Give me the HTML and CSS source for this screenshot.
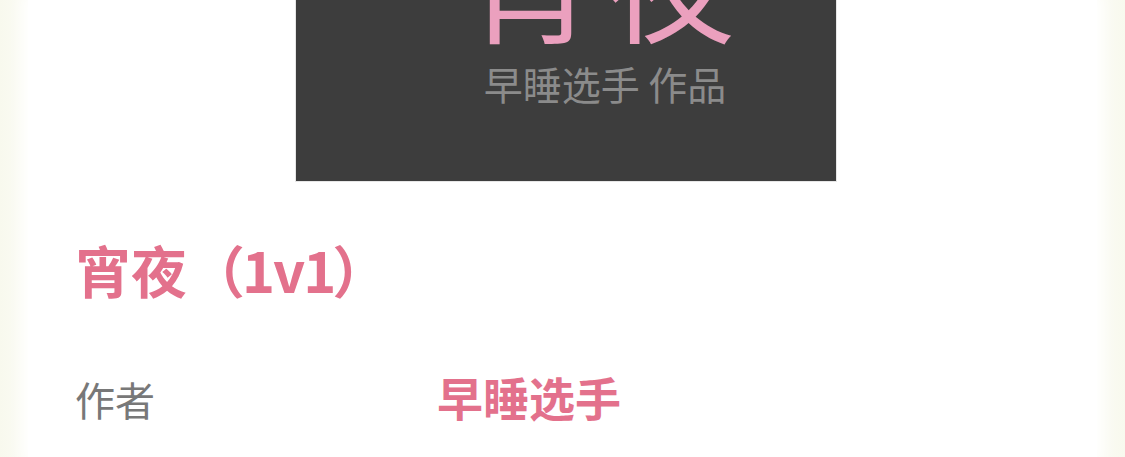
FILE: index.html
```html
<!DOCTYPE html>
<html lang="zh-CN">
<head>
	<meta charset="UTF-8">
	<meta name="viewport" content="width=device-width, initial-scale=1.0">
	<title>宵夜（1v1）</title>
	<link rel="stylesheet" href="styles.css">
</head>
<body>
	<section class="book">
		<div class="cover">
			<div class="cover_title">宵夜</div>
			<div class="cover_sub">早睡选手 作品</div>
		</div>
		<h1 class="book_name">宵夜<span class="paren">（<span class="tag">1v1</span>）</span></h1>
		<div class="info">
			<span class="info_label">作者</span>
			<span class="info_value">早睡选手</span>
		</div>
	</section>
</body>
</html>
```

FILE: styles.css
```css
*{margin:0; padding:0;}
body{
	background:linear-gradient(90deg,#f8f9ee 0,#fdfdf8 40px,#fff 60px,#fff calc(100% - 60px),#fdfdf8 calc(100% - 40px),#f8f9ee 100%);
	font-family:"Noto Sans CJK SC","Noto Sans",sans-serif;
	overflow:hidden;
}
.book{
	margin:0 28px;
	padding:0 40px 0 47px;
	height:457px;
	background:#fff;
	box-shadow:0 0 14px 6px #fff;
}
.cover{
	display:flex;
	flex-direction:column;
	justify-content:flex-end;
	align-items:center;
	box-sizing:border-box;
	width:542px;
	height:182px;
	margin:0 auto;
	padding:0 0 78px 78px;
	overflow:hidden;
	background:#3d3d3d;
	border:1px solid #e6e6e6;
	border-top:0;
}
.cover_title{
	flex:none;
	font-size:130px;
	line-height:118px;
	letter-spacing:10px;
	color:#eba0be;
	white-space:nowrap;
}
.cover_sub{
	flex:none;
	margin-top:28px;
	font-size:39px;
	line-height:40px;
	color:#8b8b8b;
	white-space:nowrap;
}
.book_name{
	margin-top:55px;
	font-size:56px;
	line-height:64px;
	font-weight:700;
	color:#e3718c;
}
.book_name .paren{
	margin-left:2px;
}
.book_name .tag{
	letter-spacing:-2px;
	margin-left:-3px;
	margin-right:-2px;
}
.info{
	display:flex;
	align-items:baseline;
	margin-top:65px;
	line-height:60px;
}
.info_label{
	width:362px;
	font-size:40px;
	color:#787878;
}
.info_value{
	font-size:46px;
	font-weight:700;
	color:#e3718c;
}
```
